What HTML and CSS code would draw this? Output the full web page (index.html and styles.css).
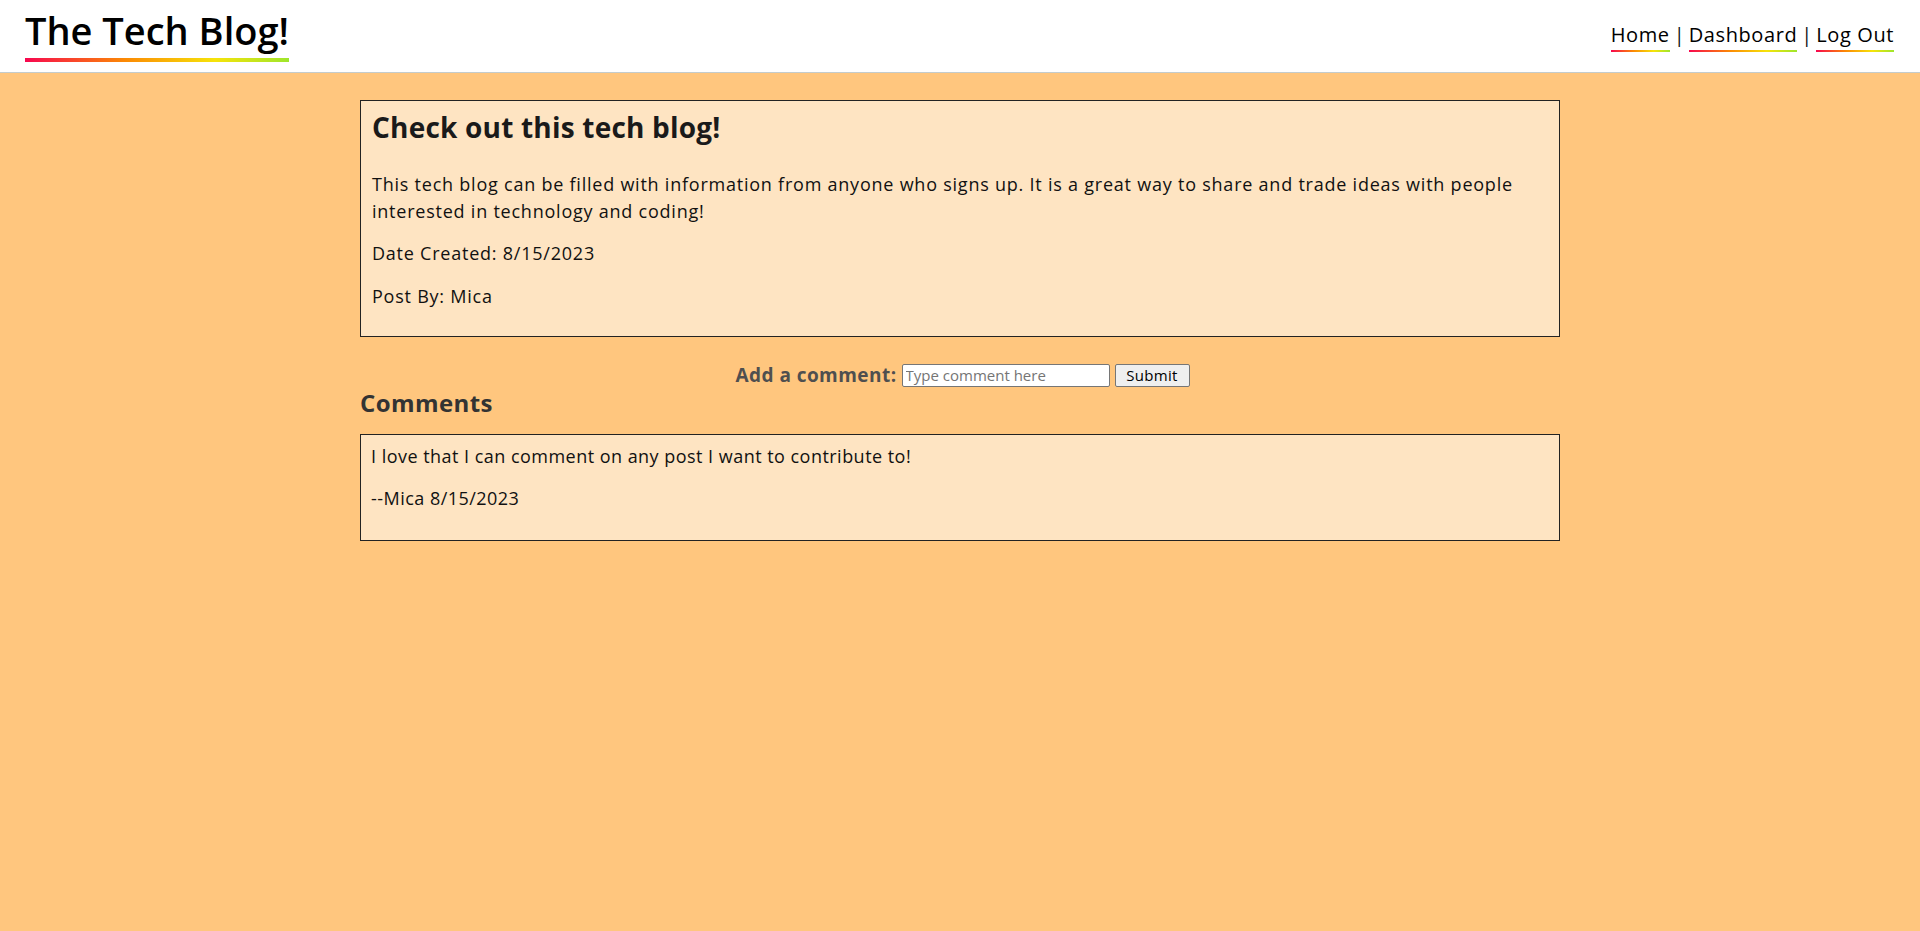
FILE: index.html
```html
<!DOCTYPE html>
<html lang="en">
<head>
<meta charset="utf-8">
<title>The Tech Blog!</title>
<link rel="stylesheet" href="styles.css">
</head>
<body>
<header class="site-header">
  <h1 class="logo">The Tech Blog!</h1>
  <nav class="nav">
    <a class="nav-link" href="#">Home</a><span class="sep">|</span><a class="nav-link" href="#">Dashboard</a><span class="sep">|</span><a class="nav-link" href="#">Log Out</a>
  </nav>
</header>
<main class="main">
  <section class="post">
    <h2 class="post-title">Check out this tech blog!</h2>
    <p class="post-body">This tech blog can be filled with information from anyone who signs up. It is a great way to share and trade ideas with people interested in technology and coding!</p>
    <p class="post-meta">Date Created: 8/15/2023</p>
    <p class="post-meta last">Post By: Mica</p>
  </section>
  <form class="comment-form">
    <label class="comment-label" for="comment">Add a comment:</label>
    <input class="comment-input" id="comment" type="text" placeholder="Type comment here">
    <button class="comment-btn" type="submit">Submit</button>
  </form>
  <h3 class="comments-title">Comments</h3>
  <section class="comment">
    <p class="comment-text">I love that I can comment on any post I want to contribute to!</p>
    <p class="comment-by">--Mica 8/15/2023</p>
  </section>
</main>
</body>
</html>
```
FILE: styles.css
```css
html, body {
  margin: 0;
  padding: 0;
}
body {
  background: #ffc67e;
  font-family: "Open Sans", "Noto Sans", sans-serif;
  color: #111;
  min-height: 931px;
}
.site-header {
  height: 72px;
  background: #fff;
  border-bottom: 1px solid #c4cccc;
  display: flex;
  justify-content: space-between;
  align-items: flex-start;
  padding: 0 26px 0 25px;
}
.logo {
  margin: 11.2px 0 0;
  font-size: 38px;
  line-height: 38px;
  font-weight: 600;
  color: #000;
  padding-bottom: 12.8px;
  background: linear-gradient(90deg, #f7074f 0%, #fb8a04 38%, #f6e30a 72%, #9fe62c 100%) left bottom / 100% 4px no-repeat;
}
.nav {
  margin-top: 19.5px;
  display: flex;
  align-items: flex-start;
  font-size: 20px;
  line-height: 30px;
}
.nav-link {
  color: #000;
  text-decoration: none;
  letter-spacing: 0.6px;
  padding-bottom: 2.5px;
  background: linear-gradient(90deg, #f7074f 0%, #fb8a04 38%, #f6e30a 72%, #9fe62c 100%) left bottom / 100% 2px no-repeat;
}
.sep {
  padding: 0 4px;
}
.main {
  width: 1200px;
  margin: 27px auto 0;
}
.post {
  box-sizing: border-box;
  width: 1200px;
  background: #fee4c2;
  border: 1px solid #222;
  padding: 5px 11px 1px;
}
.post-title {
  margin: 0 0 22.5px;
  font-size: 28px;
  line-height: 42px;
  font-weight: 700;
  letter-spacing: 0.2px;
  color: #1a1a1a;
}
.post-body, .post-meta {
  margin: 0 0 15.5px;
  font-size: 18px;
  line-height: 27px;
  letter-spacing: 0.77px;
}
.post-meta.last {
  margin-bottom: 25px;
}
.comment-form {
  display: flex;
  justify-content: center;
  align-items: center;
  gap: 5px;
  margin-top: 27px;
  padding-left: 5px;
  height: 23px;
}
.comment-label {
  font-size: 19px;
  line-height: 27px;
  font-weight: 700;
  letter-spacing: 0.45px;
  color: #4f4f4f;
}
.comment-input {
  box-sizing: border-box;
  width: 208px;
  height: 23px;
  margin: 0;
  padding: 1px 3px;
  border: 1px solid #767676;
  border-radius: 2px;
  font-family: "Open Sans", sans-serif;
  font-size: 15px;
  background: #fff;
}
.comment-btn {
  box-sizing: border-box;
  width: 75px;
  height: 23px;
  margin: 0;
  padding: 0;
  border: 1px solid #767676;
  border-radius: 2px;
  background: #efefef;
  font-family: "Open Sans", sans-serif;
  font-size: 15px;
  letter-spacing: 0.3px;
  color: #000;
}
.comments-title {
  margin: 2.3px 0 16.9px;
  font-size: 24px;
  line-height: 28.8px;
  font-weight: 700;
  letter-spacing: 0.4px;
  color: #333;
}
.comment {
  box-sizing: border-box;
  width: 1200px;
  background: #fee4c2;
  border: 1px solid #222;
  padding: 7.5px 10px 1px;
}
.comment-text, .comment-by {
  margin: 0 0 15px;
  font-size: 18px;
  line-height: 27px;
  letter-spacing: 0.47px;
}
.comment-by {
  margin-bottom: 27.5px;
}
```
